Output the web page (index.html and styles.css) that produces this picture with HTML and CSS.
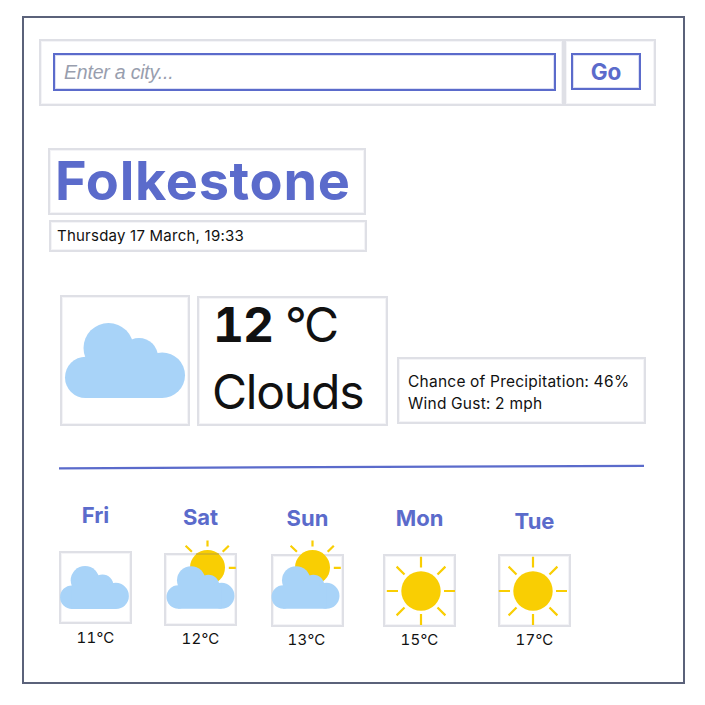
FILE: index.html
```html
<!DOCTYPE html>
<html lang="en">
<head>
<meta charset="utf-8">
<title>Weather</title>
<link rel="stylesheet" href="styles.css">
</head>
<body>
<svg width="0" height="0" class="defs">
  <symbol id="cloud" viewBox="0 0 120 75">
    <g fill="#a8d3f8"><circle cx="20.6" cy="54.4" r="20.6"/><circle cx="43.5" cy="25" r="25"/><circle cx="74" cy="34" r="19"/><circle cx="97.2" cy="52.2" r="22.8"/><path d="M20.6 34H97V75H20.6z"/></g>
  </symbol>
  <symbol id="sun" viewBox="0 0 70 70">
    <circle cx="35" cy="35" r="19.7" fill="#f9ce03"/>
    <path d="M35 .8V11.5M35 58V69M.8 35H12M58 35H69M10.6 10.6l7.9 7.9M59.4 10.6l-7.9 7.9M10.6 59.4l7.9-7.9M59.4 59.4l-7.9-7.9" stroke="#f9ce03" stroke-width="2.2"/>
  </symbol>
</svg>
<main class="frame">
  <form class="search">
    <div class="box field"><input class="city-input" type="text" placeholder="Enter a city..."></div>
    <div class="box action"><button class="go" type="button">Go</button></div>
  </form>
  <h1 class="box city"><span>Folkestone</span></h1>
  <p class="box date"><span>Thursday 17 March, 19:33</span></p>
  <section class="current">
    <div class="box icon"><svg class="big-cloud"><use href="#cloud"/></svg></div>
    <div class="box summary">
      <div class="temp"><b>12</b><span>°C</span></div>
      <div class="condition"><span>Clouds</span></div>
    </div>
    <div class="box details">
      <div><span class="rain">Chance of Precipitation: 46%</span></div>
      <div><span class="wind">Wind Gust: 2 mph</span></div>
    </div>
  </section>
  <svg class="rule" viewBox="0 0 586 6"><path d="M0 4.3L585 1.8" stroke="#5b6bcb" stroke-width="2.2"/></svg>
  <section class="forecast">
    <article class="day fri"><h2>Fri</h2><div class="box tile"><svg class="small-cloud"><use href="#cloud"/></svg></div><p>11°C</p></article>
    <article class="day sat"><h2>Sat</h2><div class="box tile"><svg class="partly" viewBox="0 0 70 70">
      <circle cx="41.5" cy="27.5" r="17.5" fill="#f9ce03"/>
      <path d="M41.5 .6V6.4M62.8 27.8h7M19.6 5.8l6.3 6M62.8 5.8l-6.1 6" stroke="#f9ce03" stroke-width="2.2"/>
      <path d="M30 14H53" stroke="#b9a13c" stroke-opacity=".5" stroke-width="2"/>
      <use href="#cloud" x=".5" y="26.2" width="68" height="42.5"/>
    </svg></div><p>12°C</p></article>
    <article class="day sunday"><h2>Sun</h2><div class="box tile"><svg class="partly" viewBox="0 0 70 70">
      <circle cx="41.5" cy="27.5" r="17.5" fill="#f9ce03"/>
      <path d="M41.5 .6V6.4M62.8 27.8h7M19.6 5.8l6.3 6M62.8 5.8l-6.1 6" stroke="#f9ce03" stroke-width="2.2"/>
      <use href="#cloud" x=".5" y="26.2" width="68" height="42.5"/>
    </svg></div><p>13°C</p></article>
    <article class="day mon"><h2>Mon</h2><div class="box tile"><svg class="clear"><use href="#sun"/></svg></div><p>15°C</p></article>
    <article class="day tue"><h2>Tue</h2><div class="box tile"><svg class="clear"><use href="#sun"/></svg></div><p>17°C</p></article>
  </section>
</main>
</body>
</html>
```
FILE: styles.css
```css
* { box-sizing: border-box; margin: 0; padding: 0; }
body { background: #fff; color: #111; font-family: Inter, "Liberation Sans", sans-serif; font-variant-numeric: tabular-nums; }
svg { display: block; overflow: visible; flex: none; }
symbol { overflow: visible; }
.defs { position: absolute; }
.frame { width: 663px; height: 668px; margin: 16px 0 0 22px; padding: 21px 0 0 15px; border: 2px solid #5b627a; }
.box { border: 2px solid #dfe0e6; box-shadow: inset 0 0 0 1px #f4f4f7; }

.search { display: flex; height: 67px; }
.field { width: 525px; padding: 12px 0 0 12px; }
.action { width: 92px; padding: 12px 0 0 5px; }
.city-input { display: block; width: 503px; height: 38px; padding: 1px 0 0 9px; border: 2px solid #5b6bcb; box-shadow: inset 0 0 0 1px #dcdff4; background: none; font: italic 19.5px "Liberation Sans", sans-serif; letter-spacing: -.2px; outline: 0; }
.city-input::placeholder { color: #989eae; opacity: 1; }
.go { display: block; width: 70px; height: 37px; border: 2px solid #5b6bcb; box-shadow: inset 0 0 0 1px #dcdff4; background: none; color: #5b6bcb; font: 700 22.5px/31px Inter, sans-serif; }

.city { width: 318px; height: 67px; margin: 42px 0 0 9px; padding-left: 5px; color: #5b6bcb; font-size: 54px; font-weight: 700; line-height: 61px; letter-spacing: .7px; white-space: nowrap; }
.date { width: 318px; height: 32px; margin: 5px 0 0 10px; padding-left: 6px; font-size: 15px; line-height: 28px; letter-spacing: .23px; font-variant-numeric: normal; }

.current { display: flex; height: 131px; margin: 43px 0 0 21px; }
.icon { width: 130px; height: 131px; padding: 26px 0 0 3px; }
.big-cloud { width: 120px; height: 75px; }
.summary { width: 191px; height: 130px; margin: 1px 0 0 7px; padding-left: 14px; font-size: 48px; white-space: nowrap; }
.temp { height: 54px; line-height: 54px; }
.temp b { font-weight: 700; letter-spacing: -1px; }
.temp span { margin-left: 12px; font-weight: 400; letter-spacing: -2.5px; }
.condition { line-height: 80px; margin-left: -1px; font-weight: 400; letter-spacing: -1.2px; }
.details { width: 249px; height: 67px; margin: 62px 0 0 9px; padding: 12px 0 0 9px; font-size: 15.5px; line-height: 21.5px; letter-spacing: .24px; white-space: nowrap; }

.rule { width: 586px; height: 6px; margin: 38px 0 0 20px; }

.forecast { display: flex; margin: 31px 0 0 20px; }
.day { width: 73px; text-align: center; }
.day h2 { height: 28px; color: #5b6bcb; font-size: 22px; font-weight: 700; line-height: 28px; }
.tile { width: 73px; height: 73px; margin-top: 22px; }
.day p { margin-top: 4px; font-size: 15px; line-height: 20px; letter-spacing: .2px; white-space: nowrap; }
.sat { margin: 2px 0 0 32px; }
.sunday { margin: 3px 0 0 34px; }
.mon { margin: 3px 0 0 39px; }
.tue { margin: 6px 0 0 42px; }
.tue .tile { margin-top: 19px; }
.sat p, .sunday p, .mon p, .tue p { margin-top: 3px; }
.sunday p { margin-left: -2px; }
.small-cloud { width: 69px; height: 43px; margin: 13px 0 0 -1px; }
.partly { width: 70px; height: 70px; margin: -15px 0 0; }
.sunday .partly { margin: -16px 0 0 -2px; }
.clear { width: 70px; height: 70px; margin-left: .5px; }
.tue .clear { margin-left: -2.3px; }
```
